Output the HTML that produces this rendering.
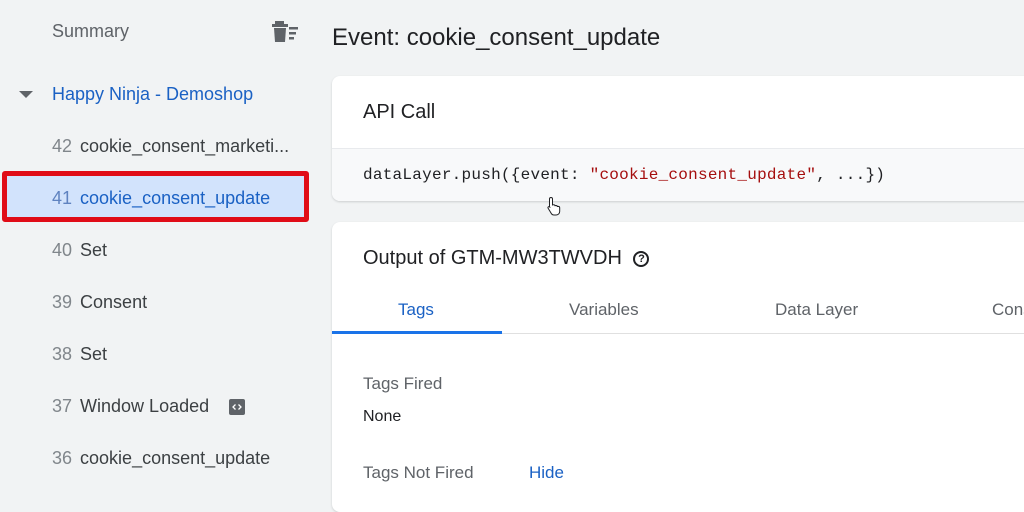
<!DOCTYPE html>
<html><head><meta charset="utf-8"><style>
*{margin:0;padding:0;box-sizing:border-box}
body{width:1024px;height:493px;overflow:hidden;background:#f1f3f4;font-family:"Liberation Sans",Arial,sans-serif;position:relative}
.a{position:absolute;white-space:nowrap}
.side{font-size:18px;color:#3c4043}
.num{color:#80868b;margin-right:8px}
.card{position:absolute;background:#fff;border-radius:8px;box-shadow:0 1px 2px rgba(60,64,67,.2)}
.mono{font-family:"Liberation Mono",monospace}
</style></head><body>
<div class="a side" style="left:52px;top:21px;color:#5f6368;font-size:18px">Summary</div>
<svg class="a" style="left:272px;top:21px" width="28" height="22" viewBox="0 0 28 22"><rect x="3" y="0" width="9" height="3" fill="#5f6368"/><rect x="0" y="3" width="16" height="3" fill="#5f6368"/><path d="M2 7h12l-1 14H3z" fill="#5f6368"/><rect x="17" y="6" width="9" height="2.5" fill="#5f6368"/><rect x="17" y="11" width="7" height="2.5" fill="#5f6368"/><rect x="17" y="16" width="5" height="2.5" fill="#5f6368"/></svg>
<svg class="a" style="left:19px;top:91px" width="14" height="8"><path d="M0 0h14L7 7z" fill="#5f6368"/></svg>
<div class="a" style="left:52px;top:84px;font-size:18px;color:#1a61c4">Happy Ninja - Demoshop</div>
<div class="a side" style="left:52px;top:136px"><span class="num">42</span>cookie_consent_marketi...</div>
<div class="a" style="left:2px;top:171px;width:307px;height:51px;border:5px solid #e00c17;border-radius:3px;background:#d2e3fc"></div>
<div class="a side" style="left:52px;top:188px;color:#1a61c4"><span class="num" style="color:#5f83c0">41</span>cookie_consent_update</div>
<div class="a side" style="left:52px;top:240px"><span class="num">40</span>Set</div>
<div class="a side" style="left:52px;top:292px"><span class="num">39</span>Consent</div>
<div class="a side" style="left:52px;top:344px"><span class="num">38</span>Set</div>
<div class="a side" style="left:52px;top:396px"><span class="num">37</span>Window Loaded</div>
<svg class="a" style="left:229px;top:399px" width="16" height="16" viewBox="0 0 16 16"><rect width="16" height="16" rx="2" fill="#5f6368"/><path d="M6.5 5.5L4 8l2.5 2.5M9.5 5.5L12 8l-2.5 2.5" stroke="#fff" stroke-width="1.3" fill="none"/></svg>
<div class="a side" style="left:52px;top:448px"><span class="num">36</span>cookie_consent_update</div>

<div class="a" style="left:332px;top:24px;font-size:24px;color:#202124">Event: cookie_consent_update</div>
<div class="card" style="left:332px;top:76px;width:720px;height:125px;overflow:hidden">
 <div class="a" style="left:31px;top:25px;font-size:20px;color:#202124">API Call</div>
 <div class="a" style="left:0;top:72px;width:720px;height:53px;background:#f8f9fa;border-top:1px solid #e8eaed"></div>
 <div class="a mono" style="left:31px;top:90px;font-size:16px;color:#202124;letter-spacing:0.25px">dataLayer.push({event: <span style="color:#a50e0e">"cookie_consent_update"</span>, ...})</div>
</div>
<svg class="a" style="left:546px;top:196px" width="16" height="20" viewBox="0 0 16 20"><path d="M5 1.5c1 0 1.5.6 1.5 1.5v6l1-.3c1 0 1.5.5 1.5 1l1-.2c.9 0 1.3.5 1.3 1l1-.1c1 0 1.4.7 1.4 1.5v3.5c0 2-1.5 3.6-3.5 3.6H8c-1.5 0-2.4-.8-3-2L2 12c-.4-.8.6-1.8 1.6-1L3.5 11V3c0-.9.6-1.5 1.5-1.5z" fill="#fff" stroke="#202124" stroke-width="1"/></svg>
<div class="card" style="left:332px;top:222px;width:720px;height:290px;overflow:hidden">
 <div class="a" style="left:31px;top:25px;font-size:20px;color:#202124">Output of GTM-MW3TWVDH <span style="display:inline-block;width:16px;height:16px;border:2px solid #202124;border-radius:50%;font-size:11px;text-align:center;line-height:12px;vertical-align:2px;margin-left:6px;font-weight:bold">?</span></div>
 <div class="a" style="left:0;top:111px;width:720px;height:1px;background:#e0e0e0"></div>
 <div class="a" style="left:0;top:109px;width:170px;height:3px;background:#1a73e8"></div>
 <div class="a" style="left:66px;top:78px;font-size:17px;color:#1a61c4">Tags</div>
 <div class="a" style="left:237px;top:78px;font-size:17px;color:#5f6368">Variables</div>
 <div class="a" style="left:443px;top:78px;font-size:17px;color:#5f6368">Data Layer</div>
 <div class="a" style="left:660px;top:78px;font-size:17px;color:#5f6368">Consent</div>
 <div class="a" style="left:31px;top:152px;font-size:17px;color:#5f6368">Tags Fired</div>
 <div class="a" style="left:31px;top:186px;font-size:16px;color:#202124">None</div>
 <div class="a" style="left:31px;top:241px;font-size:17px;color:#5f6368">Tags Not Fired</div>
 <div class="a" style="left:197px;top:241px;font-size:17px;color:#1a61c4">Hide</div>
</div>
</body></html>
